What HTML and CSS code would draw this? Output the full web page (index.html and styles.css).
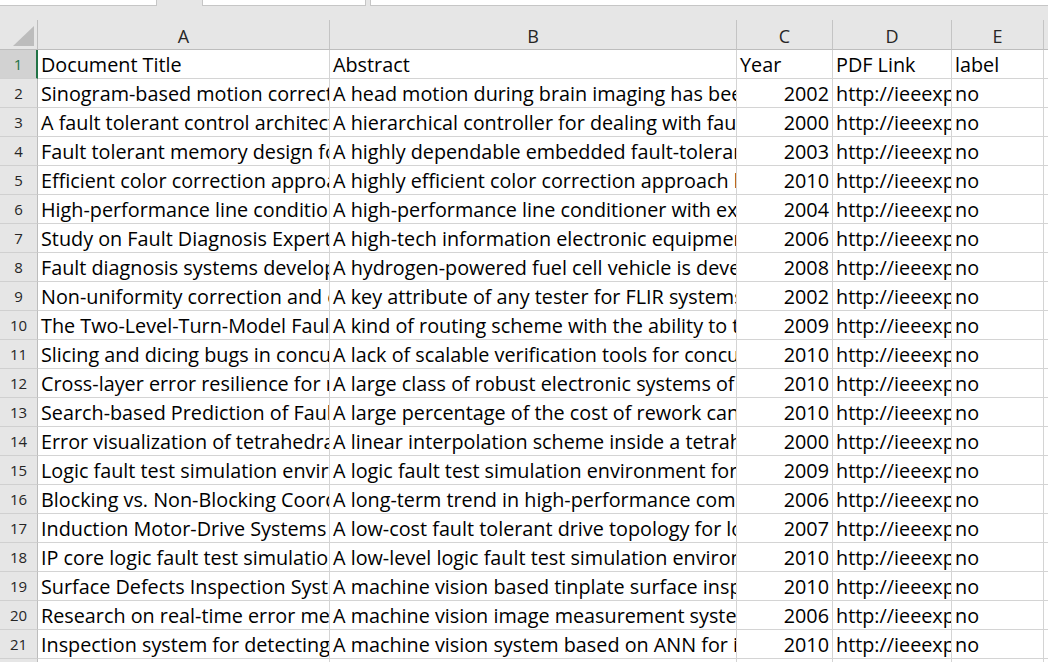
FILE: index.html
```html
<!DOCTYPE html>
<html>
<head>
<meta charset="utf-8">
<link rel="stylesheet" href="styles.css">
</head>
<body>
<div class="tabs">
  <div class="tab tab1"></div>
  <div class="tab tab2"></div>
  <div class="tab tab3"></div>
</div>
<div class="sheet">
  <div class="ch corner"><span class="tri"></span></div>
  <div class="ch">A</div>
  <div class="ch">B</div>
  <div class="ch">C</div>
  <div class="ch">D</div>
  <div class="ch">E</div>
  <div class="ch"></div>

  <div class="rh active">1</div><div class="c">Document Title</div><div class="c">Abstract</div><div class="c">Year</div><div class="c">PDF Link</div><div class="c">label</div><div class="c"></div>
  <div class="rh">2</div><div class="c">Sinogram-based motion correction of PET images</div><div class="c">A head motion during brain imaging has been recognized</div><div class="c num">2002</div><div class="c">http://ieeexplore.ieee.org/stamp/stamp.jsp</div><div class="c">no</div><div class="c"></div>
  <div class="rh">3</div><div class="c">A fault tolerant control architecture</div><div class="c">A hierarchical controller for dealing with faults</div><div class="c num">2000</div><div class="c">http://ieeexplore.ieee.org/stamp/stamp.jsp</div><div class="c">no</div><div class="c"></div>
  <div class="rh">4</div><div class="c">Fault tolerant memory design for</div><div class="c">A highly dependable embedded fault-tolerant memory</div><div class="c num">2003</div><div class="c">http://ieeexplore.ieee.org/stamp/stamp.jsp</div><div class="c">no</div><div class="c"></div>
  <div class="rh">5</div><div class="c">Efficient color correction approach</div><div class="c">A highly efficient color correction approach based</div><div class="c num">2010</div><div class="c">http://ieeexplore.ieee.org/stamp/stamp.jsp</div><div class="c">no</div><div class="c"></div>
  <div class="rh">6</div><div class="c">High-performance line conditioner</div><div class="c">A high-performance line conditioner with excellent</div><div class="c num">2004</div><div class="c">http://ieeexplore.ieee.org/stamp/stamp.jsp</div><div class="c">no</div><div class="c"></div>
  <div class="rh">7</div><div class="c">Study on Fault Diagnosis Expert System</div><div class="c">A high-tech information electronic equipment</div><div class="c num">2006</div><div class="c">http://ieeexplore.ieee.org/stamp/stamp.jsp</div><div class="c">no</div><div class="c"></div>
  <div class="rh">8</div><div class="c">Fault diagnosis systems development</div><div class="c">A hydrogen-powered fuel cell vehicle is developed</div><div class="c num">2008</div><div class="c">http://ieeexplore.ieee.org/stamp/stamp.jsp</div><div class="c">no</div><div class="c"></div>
  <div class="rh">9</div><div class="c">Non-uniformity correction and calibration</div><div class="c">A key attribute of any tester for FLIR systems is</div><div class="c num">2002</div><div class="c">http://ieeexplore.ieee.org/stamp/stamp.jsp</div><div class="c">no</div><div class="c"></div>
  <div class="rh">10</div><div class="c">The Two-Level-Turn-Model Fault-tolerant</div><div class="c">A kind of routing scheme with the ability to tolerate</div><div class="c num">2009</div><div class="c">http://ieeexplore.ieee.org/stamp/stamp.jsp</div><div class="c">no</div><div class="c"></div>
  <div class="rh">11</div><div class="c">Slicing and dicing bugs in concurrent</div><div class="c">A lack of scalable verification tools for concurrent</div><div class="c num">2010</div><div class="c">http://ieeexplore.ieee.org/stamp/stamp.jsp</div><div class="c">no</div><div class="c"></div>
  <div class="rh">12</div><div class="c">Cross-layer error resilience for robust</div><div class="c">A large class of robust electronic systems of the</div><div class="c num">2010</div><div class="c">http://ieeexplore.ieee.org/stamp/stamp.jsp</div><div class="c">no</div><div class="c"></div>
  <div class="rh">13</div><div class="c">Search-based Prediction of Fault</div><div class="c">A large percentage of the cost of rework can be</div><div class="c num">2010</div><div class="c">http://ieeexplore.ieee.org/stamp/stamp.jsp</div><div class="c">no</div><div class="c"></div>
  <div class="rh">14</div><div class="c">Error visualization of tetrahedral</div><div class="c">A linear interpolation scheme inside a tetrahedron</div><div class="c num">2000</div><div class="c">http://ieeexplore.ieee.org/stamp/stamp.jsp</div><div class="c">no</div><div class="c"></div>
  <div class="rh">15</div><div class="c">Logic fault test simulation environment</div><div class="c">A logic fault test simulation environment for the</div><div class="c num">2009</div><div class="c">http://ieeexplore.ieee.org/stamp/stamp.jsp</div><div class="c">no</div><div class="c"></div>
  <div class="rh">16</div><div class="c">Blocking vs. Non-Blocking Coordinated</div><div class="c">A long-term trend in high-performance computing</div><div class="c num">2006</div><div class="c">http://ieeexplore.ieee.org/stamp/stamp.jsp</div><div class="c">no</div><div class="c"></div>
  <div class="rh">17</div><div class="c">Induction Motor-Drive Systems with</div><div class="c">A low-cost fault tolerant drive topology for low</div><div class="c num">2007</div><div class="c">http://ieeexplore.ieee.org/stamp/stamp.jsp</div><div class="c">no</div><div class="c"></div>
  <div class="rh">18</div><div class="c">IP core logic fault test simulation</div><div class="c">A low-level logic fault test simulation environment</div><div class="c num">2010</div><div class="c">http://ieeexplore.ieee.org/stamp/stamp.jsp</div><div class="c">no</div><div class="c"></div>
  <div class="rh">19</div><div class="c">Surface Defects Inspection System</div><div class="c">A machine vision based tinplate surface inspection</div><div class="c num">2010</div><div class="c">http://ieeexplore.ieee.org/stamp/stamp.jsp</div><div class="c">no</div><div class="c"></div>
  <div class="rh">20</div><div class="c">Research on real-time error measurement</div><div class="c">A machine vision image measurement system</div><div class="c num">2006</div><div class="c">http://ieeexplore.ieee.org/stamp/stamp.jsp</div><div class="c">no</div><div class="c"></div>
  <div class="rh">21</div><div class="c">Inspection system for detecting</div><div class="c">A machine vision system based on ANN for identification</div><div class="c num">2010</div><div class="c">http://ieeexplore.ieee.org/stamp/stamp.jsp</div><div class="c">no</div><div class="c"></div>
  <div class="rh">22</div><div class="c"></div><div class="c"></div><div class="c"></div><div class="c"></div><div class="c"></div><div class="c"></div>
</div>
</body>
</html>
```

FILE: styles.css
```css
html, body {
  margin: 0;
  padding: 0;
  width: 1048px;
  height: 662px;
  overflow: hidden;
  background: #e6e6e6;
  font-family: "Open Sans", "Noto Sans", sans-serif;
}

.tabs {
  display: flex;
  height: 20px;
  align-items: flex-start;
}

.tab {
  height: 5px;
  background: #ffffff;
  border-bottom: 1px solid #c6c6c6;
}

.tab1 {
  width: 156px;
  border-right: 1px solid #c6c6c6;
}

.tab2 {
  margin-left: 45px;
  width: 162px;
  border-left: 1px solid #c6c6c6;
  border-right: 1px solid #c6c6c6;
}

.tab3 {
  margin-left: 4px;
  flex: 1;
  border-left: 1px solid #c6c6c6;
}

.sheet {
  display: grid;
  grid-template-columns: 38px 292px 407px 96px 119px 92px 1fr;
  grid-auto-rows: 29px;
  grid-template-rows: 30px;
  background: #ffffff;
}

.ch {
  box-sizing: border-box;
  height: 30px;
  background: #e6e6e6;
  border-right: 1px solid #c4c4c4;
  border-bottom: 1px solid #bdbdbd;
  text-align: center;
  font-size: 18px;
  line-height: 33px;
  color: #262626;
  overflow: hidden;
}

.corner {
  position: relative;
  border-right-color: #bdbdbd;
}

.tri {
  position: absolute;
  left: 13px;
  top: 6px;
  width: 0;
  height: 0;
  border-left: 21px solid transparent;
  border-bottom: 20px solid #bcbcbc;
}

.rh {
  box-sizing: border-box;
  height: 29px;
  background: #e6e6e6;
  border-right: 1px solid #bdbdbd;
  border-bottom: 1px solid #d0d0d0;
  text-align: center;
  font-size: 15px;
  line-height: 28px;
  color: #262626;
  overflow: hidden;
}

.rh.active {
  background: #d2d2d2;
  color: #217346;
  border-right: 2px solid #217346;
}

.c {
  box-sizing: border-box;
  height: 29px;
  border-right: 1px solid #d4d4d4;
  border-bottom: 1px solid #d4d4d4;
  padding: 0 3px;
  font-size: 19.8px;
  line-height: 30px;
  color: #000000;
  white-space: nowrap;
  overflow: hidden;
}

.num {
  text-align: right;
}
```
